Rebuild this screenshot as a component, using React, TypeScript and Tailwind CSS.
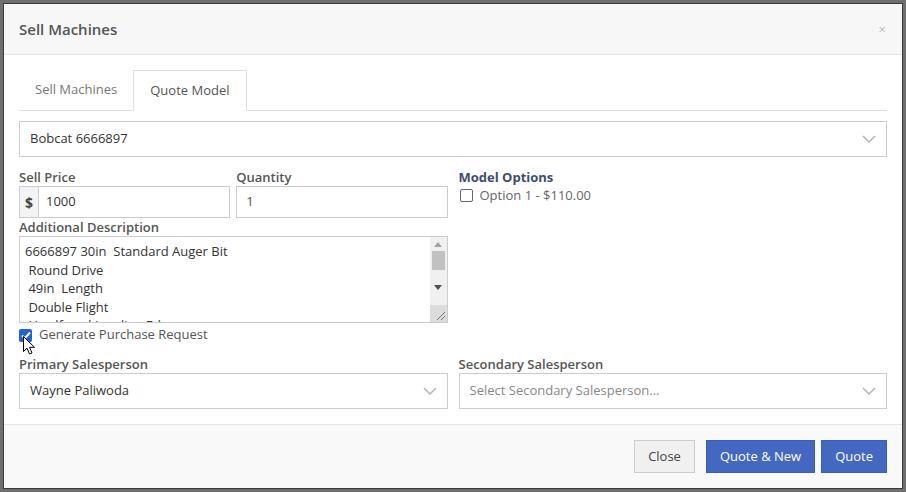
import React from 'react';

const font = { fontFamily: '"Open Sans", "Liberation Sans", sans-serif' };

function Chevron() {
  return (
    <svg width="14" height="8" viewBox="0 0 14 8" className="text-[#b5b5b5]">
      <path d="M1 1l6 6 6-6" fill="none" stroke="currentColor" strokeWidth="1.5" />
    </svg>
  );
}

function Select({ value, placeholder }: { value?: string; placeholder?: string }) {
  return (
    <div className="flex h-[36px] items-center justify-between border border-[#cccccc] bg-white pl-[10px] pr-[10px] text-[13px]">
      <span className={value ? 'text-[#333]' : 'text-[#888]'}>{value || placeholder}</span>
      <Chevron />
    </div>
  );
}

function Label({ children }: { children: React.ReactNode }) {
  return <div className="text-[13px] font-semibold leading-[18px] text-[#555]">{children}</div>;
}

export default function App() {
  return (
    <div style={font} className="relative h-[492px] w-[906px] overflow-hidden bg-[#6f6f6f] pl-[3px] pt-[3px]">
      <div className="flex h-[486px] w-[900px] flex-col border border-[#3a3a3a] bg-white">
        {/* header */}
        <div className="flex h-[51px] shrink-0 items-center justify-between border-b border-[#e3e3e3] bg-[#f7f7f7] pl-[15px] pr-[16px]">
          <h1 className="text-[15px] font-semibold text-[#555]">Sell Machines</h1>
          <span className="text-[13px] leading-none text-[#b9b9b9]">×</span>
        </div>

        {/* body */}
        <div className="flex-1 px-[15px] pt-[15px]">
          <div className="flex h-[41px] items-end border-b border-[#dddddd]">
            <div className="flex h-[40px] items-center px-[16px] text-[13px] text-[#777]">Sell Machines</div>
            <div className="-mb-[1px] flex h-[41px] items-center border border-b-white border-[#dddddd] bg-white px-[16px] text-[13px] text-[#555]">Quote Model</div>
          </div>

          <div className="mt-[10px]">
            <Select value="Bobcat 6666897" />
          </div>

          <div className="mt-[11px] grid grid-cols-2 gap-x-[11px]">
            <div>
              <div className="grid grid-cols-2 gap-x-[6px]">
                <div>
                  <Label>Sell Price</Label>
                  <div className="flex h-[32px] border border-[#cccccc] text-[13px]">
                    <div className="flex w-[19px] items-center justify-center border-r border-[#cccccc] bg-[#f3f3f3] text-[14px] font-bold text-[#444]">$</div>
                    <div className="flex items-center pl-[7px] text-[#333]">1000</div>
                  </div>
                </div>
                <div>
                  <Label>Quantity</Label>
                  <div className="flex h-[32px] items-center border border-[#cccccc] pl-[9px] text-[13px] text-[#555]">1</div>
                </div>
              </div>

              <div>
                <Label>Additional Description</Label>
                <div className="flex h-[87px] border border-[#cccccc] text-[13px] text-[#333]">
                  <div className="flex-1 overflow-hidden pl-[5px] pt-[5px] leading-[18.6px]">
                    <div>6666897 30in&nbsp; Standard Auger Bit</div>
                    <div>&nbsp;Round Drive</div>
                    <div>&nbsp;49in&nbsp; Length</div>
                    <div>&nbsp;Double Flight</div>
                    <div>&nbsp;Hardfaced Leading Edge</div>
                  </div>
                  <div className="flex w-[17px] flex-col bg-[#f0f0f0]">
                    <div className="flex h-[14px] items-center justify-center">
                      <svg width="8" height="5" viewBox="0 0 8 5"><path d="M0 5L4 0L8 5Z" fill="#a3a3a3" /></svg>
                    </div>
                    <div className="mx-auto h-[19px] w-[13px] bg-[#c1c1c1]" />
                    <div className="flex flex-1 items-center justify-center">
                      <svg width="8" height="5" viewBox="0 0 8 5"><path d="M0 0L4 5L8 0Z" fill="#505050" /></svg>
                    </div>
                    <div className="flex h-[17px] items-end justify-end bg-[#dcdcdc] p-[2px]">
                      <svg width="9" height="9" viewBox="0 0 9 9"><path d="M1 9L9 1M5 9L9 5" stroke="#777" strokeWidth="1" /></svg>
                    </div>
                  </div>
                </div>
              </div>

              <div className="mt-[3px] flex h-[18px] items-center gap-[7px]">
                <div className="flex h-[13px] w-[13px] items-center justify-center rounded-[2px] bg-[#1f63d6]">
                  <svg width="10" height="9" viewBox="0 0 10 9"><path d="M1 4.5l2.8 2.8L9 1.5" fill="none" stroke="white" strokeWidth="2" /></svg>
                </div>
                <span className="text-[13px] text-[#555]">Generate Purchase Request</span>
              </div>
            </div>

            <div>
              <div className="text-[13px] font-bold leading-[18px] text-[#3f4d6b]">Model Options</div>
              <div className="flex items-center gap-[7px] pl-[1px]">
                <div className="h-[13px] w-[13px] rounded-[2px] border border-[#666] bg-white" />
                <span className="text-[13px] text-[#666]">Option 1 - $110.00</span>
              </div>
            </div>
          </div>

          <div className="mt-[11px] grid grid-cols-2 gap-x-[11px]">
            <div>
              <Label>Primary Salesperson</Label>
              <Select value="Wayne Paliwoda" />
            </div>
            <div>
              <Label>Secondary Salesperson</Label>
              <Select placeholder="Select Secondary Salesperson..." />
            </div>
          </div>
        </div>

        {/* footer */}
        <div className="flex h-[64px] shrink-0 items-center justify-end gap-[6px] border-t border-[#e5e5e5] bg-[#f9f9f9] pr-[15px]">
          <button className="mr-[5px] h-[33px] border border-[#cccccc] bg-[#f0f0f0] px-[13px] text-[13px] text-[#444]">Close</button>
          <button className="h-[33px] border border-[#3a5fb3] bg-[#4468c2] px-[13px] text-[13px] text-white">Quote &amp; New</button>
          <button className="h-[33px] border border-[#3a5fb3] bg-[#4468c2] px-[13px] text-[13px] text-white">Quote</button>
        </div>
      </div>

      {/* mouse cursor */}
      <svg className="absolute left-[23px] top-[336px]" width="12" height="19" viewBox="0 0 12 19">
        <path d="M0.5 0.5V15.5L4 12.2L6.5 18L9 17L6.6 11.3H11.5Z" fill="white" stroke="black" strokeWidth="1" strokeLinejoin="round" />
      </svg>
    </div>
  );
}
